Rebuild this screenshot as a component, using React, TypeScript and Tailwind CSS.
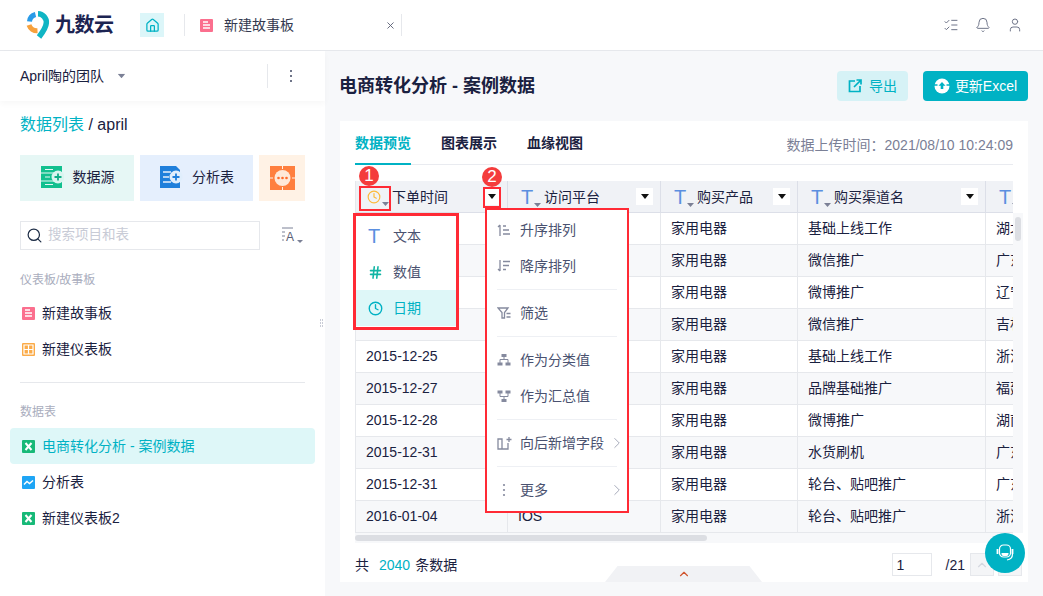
import React from "react";
import { Home, X, ListChecks, Bell, User, Search, Clock, ChevronRight, ChevronUp, Hash } from "lucide-react";

const rows = [
  ["", "", "家用电器", "基础上线工作", "湖北"],
  ["", "", "家用电器", "微信推广", "广东"],
  ["", "", "家用电器", "微博推广", "辽宁"],
  ["", "", "家用电器", "微信推广", "吉林"],
  ["2015-12-25", "", "家用电器", "基础上线工作", "浙江"],
  ["2015-12-27", "", "家用电器", "品牌基础推广", "福建"],
  ["2015-12-28", "", "家用电器", "微博推广", "湖南"],
  ["2015-12-31", "", "家用电器", "水货刷机", "广东"],
  ["2015-12-31", "", "家用电器", "轮台、贴吧推广", "广东"],
  ["2016-01-04", "IOS", "家用电器", "轮台、贴吧推广", "浙江"],
];

const Logo = () => (
  <svg width="24" height="28" viewBox="0 0 24 28" fill="none">
    <path d="M3.500 10.500 A8 8 0 0 1 9.500 3.500" stroke="#2a9be8" strokeWidth="5" />
    <path d="M12 2.800 A8.500 8.500 0 0 1 20.300 12 C20 17 16 22 13 26" stroke="#10b5c4" strokeWidth="5.500" />
    <path d="M3 14 A8.500 8.500 0 0 0 11.500 19.800" stroke="#f7a13c" strokeWidth="5" />
  </svg>
);

const StoryIcon = () => (
  <svg width="13" height="13" viewBox="0 0 13 13">
    <rect width="13" height="13" rx="1" fill="#fb6f8e" />
    <path d="M3 3h5M3 6h7M3 9h7" stroke="#fff" strokeWidth="1.300" />
  </svg>
);
const BoardIcon = () => (
  <svg width="13" height="13" viewBox="0 0 13 13">
    <rect width="13" height="13" rx="1" fill="#fbab48" />
    <path d="M2 2h9v9H2z M6.500 2v9 M2 6.500h9" stroke="#fff" strokeWidth="1.200" fill="none" />
  </svg>
);
const ExcelIcon = () => (
  <svg width="13" height="13" viewBox="0 0 13 13">
    <rect width="13" height="13" rx="1" fill="#17b978" />
    <path d="M3.500 3 L9.500 10 M9.500 3 L3.500 10" stroke="#fff" strokeWidth="2" />
  </svg>
);
const ChartIcon = () => (
  <svg width="13" height="13" viewBox="0 0 13 13">
    <rect width="13" height="13" rx="1" fill="#1ea5f5" />
    <path d="M2 8.500 L5 5.500 L7.500 7.500 L11 4.500" stroke="#fff" strokeWidth="1.500" fill="none" />
  </svg>
);

const DataSourceIcon = () => (
  <svg width="24" height="24" viewBox="0 0 24 24">
    <rect x="1" y="1" width="21" height="22" fill="#12c08f" />
    <path d="M1 8h21M1 16h21M5 4.500h8M5 12h5M5 19.500h8" stroke="#e6f7f5" strokeWidth="1.200" />
    <circle cx="18" cy="12" r="6.500" fill="#d9f5ef" />
    <path d="M18 8.500v7M14.500 12h7" stroke="#10ae86" strokeWidth="1.800" />
  </svg>
);
const AnalysisIcon = () => (
  <svg width="24" height="24" viewBox="0 0 24 24">
    <path d="M1 1h16l4 4v18H1z" fill="#1f7fdb" />
    <path d="M4 7h8M4 12h6M4 17h8" stroke="#e6f0fb" strokeWidth="1.400" />
    <circle cx="17" cy="12" r="6.500" fill="#e0eefc" />
    <path d="M17 8.500v7M13.500 12h7" stroke="#1f7fdb" strokeWidth="1.800" />
  </svg>
);
const MoreIcon = () => (
  <svg width="25" height="24" viewBox="0 0 25 24">
    <rect width="25" height="24" fill="#ff7f3e" />
    <path d="M12.500 0v3M12.500 21v3M0 12h3M22 12h3" stroke="#fff2e5" strokeWidth="1" />
    <circle cx="12.500" cy="12" r="8" fill="#ffe9d9" />
    <circle cx="8.500" cy="12" r="1.300" fill="#ff6a2a" />
    <circle cx="12.500" cy="12" r="1.300" fill="#ff6a2a" />
    <circle cx="16.500" cy="12" r="1.300" fill="#ff6a2a" />
  </svg>
);
const SortAzIcon = () => (
  <svg width="22" height="18" viewBox="0 0 22 18" fill="none">
    <path d="M1 1h11M1 5h3M1 9h3M1 13h2" stroke="#7b8096" strokeWidth="1" />
    <text x="5" y="14" fontSize="12" fill="#5b6075" fontFamily="Liberation Sans">A</text>
    <path d="M16 13h6l-3 3z" fill="#7b8096" />
  </svg>
);
const ExportIcon = () => (
  <svg width="14" height="14" viewBox="0 0 14 14" fill="none" stroke="#00b2c4" strokeWidth="1.700">
    <path d="M7 2H1.500v10.500H12V7M6 8l6.500-6.500M8.500 1H13v4.500" />
  </svg>
);
const RefreshIcon = () => (
  <svg width="16" height="16" viewBox="0 0 16 16">
    <circle cx="8" cy="8" r="7.500" fill="#fff" />
    <path d="M0 7h3.500M12.500 7H16" stroke="#00b2c4" strokeWidth="1.600" />
    <path d="M8 4l3.500 3.800H9.300V11H6.700V7.800H4.500z" fill="#00b2c4" />
  </svg>
);
const ChatIcon = () => (
  <svg width="24" height="24" viewBox="0 0 24 24" fill="none" stroke="#fff" strokeWidth="1.200">
    <rect x="6.500" y="4" width="11" height="12" rx="4" />
    <path d="M8.500 12h7v1a2 2 0 0 1-2 2h-3a2 2 0 0 1-2-2z" fill="#fff" stroke="none" />
    <path d="M4.500 8v5M19.500 8v5" strokeWidth="1.800" />
    <path d="M19.500 13c0 3.500-2.500 5.500-5.500 6" />
  </svg>
);

const gray = "#858a9e";
const Asc = () => (
  <svg width="14" height="14" viewBox="0 0 14 14" fill="none" stroke={gray} strokeWidth="1.300">
    <path d="M3 2v11M1 4l2-2M6 3h3M6 7h6M6 11h7" />
  </svg>
);
const Desc = () => (
  <svg width="14" height="14" viewBox="0 0 14 14" fill="none" stroke={gray} strokeWidth="1.300">
    <path d="M3 1v11M1 10l2 2M6 2.500h7M6 6.500h6M6 10.500h3" />
  </svg>
);
const Filter = () => (
  <svg width="14" height="14" viewBox="0 0 14 14" fill="none" stroke={gray} strokeWidth="1.300">
    <path d="M1 2h10L7.500 6.500V12H5V6.500z M9.500 7.500h4M9.500 11h4" />
  </svg>
);
const Category = () => (
  <svg width="14" height="14" viewBox="0 0 14 14" fill={gray} stroke={gray}>
    <rect x="5" y="1.500" width="4" height="2" />
    <rect x="1" y="10" width="4" height="2" />
    <rect x="9" y="10" width="4" height="2" />
    <path d="M3 10V6.500h8V10M7 3.500v3" fill="none" />
  </svg>
);
const Summary = () => (
  <svg width="14" height="14" viewBox="0 0 14 14" fill={gray} stroke={gray}>
    <rect x="1" y="2" width="4" height="2" />
    <rect x="9" y="2" width="4" height="2" />
    <rect x="5" y="10.500" width="4" height="2" />
    <path d="M3 4v3.500h8V4M7 7.500v3" fill="none" />
  </svg>
);
const AddField = () => (
  <svg width="15" height="15" viewBox="0 0 15 15" fill="none" stroke={gray} strokeWidth="1.300">
    <path d="M1 3h4v10H1zM5 13h6V7M12 1v5M9.500 3.500h5" />
  </svg>
);
const Dots = () => (
  <svg width="14" height="14" viewBox="0 0 14 14" fill={gray}>
    <circle cx="7" cy="2" r="1.100" />
    <circle cx="7" cy="7" r="1.100" />
    <circle cx="7" cy="12" r="1.100" />
  </svg>
);

const Caret = ({ className = "" }: { className?: string }) => (
  <svg width="7" height="4" viewBox="0 0 7 4" className={className}>
    <path d="M0 0h7L3.500 4z" fill="#7b8096" />
  </svg>
);

const SideItem = ({ icon, label, active }: { icon: React.ReactNode; label: string; active?: boolean }) => (
  <div className={`flex h-9 items-center gap-[7px] rounded-sm pl-3 text-sm ${active ? "bg-[#def7f8] text-[#00b2c4]" : "text-[#1a2140]"}`}>
    <span className="flex w-[13px]">{icon}</span>
    {label}
  </div>
);

const HeadCell = ({ icon, label, w, last }: { icon: React.ReactNode; label: string; w: string; last?: boolean }) => (
  <th className={`${w} h-8 border-r border-b border-[#dcdfe8] bg-[#f0f2f6] p-0 text-left font-normal`}>
    <div className="flex h-full items-center pl-[13px] pr-[7px] text-sm text-[#1a2140]">
      {icon}
      <span className="truncate">{label}</span>
      {!last && (
        <span className="ml-auto flex h-[17px] w-[17px] shrink-0 items-center justify-center bg-white">
          <span className="h-0 w-0 border-x-[4.500px] border-t-[5px] border-x-transparent border-t-[#111]" />
        </span>
      )}
    </div>
  </th>
);

const TIcon = () => (
  <span className="relative mr-[4px] w-[19px] shrink-0 text-[20px] leading-none text-[#5b8fe0]">
    T
    <Caret className="absolute bottom-0 left-[13px]" />
  </span>
);

const MenuItem = ({ icon, label, arrow }: { icon: React.ReactNode; label: string; arrow?: boolean }) => (
  <div className="flex h-9 items-center pl-[10px] pr-[1px] text-sm text-[#4a5270]">
    <span className="flex w-[23px] shrink-0">{icon}</span>
    <span>{label}</span>
    {arrow && <ChevronRight size={18} strokeWidth={1} className="ml-auto shrink-0 text-[#8a8fa3]" />}
  </div>
);
const MenuLine = () => <div className="mx-[10px] my-[5px] h-px bg-[#eef0f4]" />;

export default function App() {
  return (
    <div
      className="relative flex h-[596px] w-[1043px] flex-col overflow-hidden bg-white"
      style={{ fontFamily: "'Liberation Sans','Noto Sans CJK SC',sans-serif" }}
    >
      {/* top bar */}
      <header className="flex h-[51px] shrink-0 items-center border-b border-[#e6e8ec] pl-[26px]">
        <Logo />
        <span className="ml-[5px] w-[58px] whitespace-nowrap text-[20px] font-bold leading-none tracking-[-0.5px] text-[#1c2452]">九数云</span>
        <span className="ml-[27px] flex h-6 w-6 items-center justify-center bg-[#dcf6f9]">
          <Home size={15} className="text-[#00b2c4]" />
        </span>
        <span className="ml-5 h-[22px] w-px bg-[#e6e8ec]" />
        <span className="ml-[15px] flex"><StoryIcon /></span>
        <span className="ml-[11px] text-sm text-[#33394f]">新建故事板</span>
        <X size={11} className="ml-[91px] text-[#5b6075]" />
        <span className="ml-[5px] h-[22px] w-px bg-[#e6e8ec]" />
        <div className="ml-auto flex items-center gap-4 pr-5 text-[#6f7589]">
          <ListChecks size={16} strokeWidth={1.500} />
          <Bell size={16} strokeWidth={1.500} />
          <User size={16} strokeWidth={1.500} />
        </div>
      </header>

      <div className="flex min-h-0 flex-1">
        {/* sidebar */}
        <aside className="relative w-[325px] shrink-0 bg-white">
          <div className="flex h-[50px] items-center pl-5 shadow-[0_3px_6px_rgba(0,0,0,0.03)]">
            <span className="text-sm text-[#1a2140]">April陶的团队</span>
            <Caret className="ml-[14px] scale-110" />
            <span className="ml-[142px] h-6 w-px bg-[#e6e8ec]" />
            <span className="ml-[22px] flex flex-col gap-[3px]">
              <i className="h-[2px] w-[2px] bg-[#6f7589]" />
              <i className="h-[2px] w-[2px] bg-[#6f7589]" />
              <i className="h-[2px] w-[2px] bg-[#6f7589]" />
            </span>
          </div>
          <div className="mt-[15px] pl-5 text-base leading-[18px] text-[#1a2140]">
            <span className="text-[#00b2c4]">数据列表</span> / april
          </div>
          <div className="mt-[21px] flex gap-[6px] pl-5">
            <div className="flex h-[46px] w-[114px] items-center justify-center gap-[9px] bg-[#e6f7f5] pb-[2px] text-sm text-[#1a2140]">
              <DataSourceIcon />
              数据源
            </div>
            <div className="flex h-[46px] w-[113px] items-center justify-center gap-[9px] bg-[#e5effd] pb-[2px] text-sm text-[#1a2140]">
              <AnalysisIcon />
              分析表
            </div>
            <div className="flex h-[46px] w-[46px] items-center justify-center bg-[#fff2e5]">
              <MoreIcon />
            </div>
          </div>
          <div className="mt-5 flex items-center pl-5">
            <div className="flex h-[29px] w-[240px] items-center gap-[5px] border border-[#e6e8ec] pl-[5px] text-[13.500px] text-[#c8cbd6]">
              <Search size={17} strokeWidth={1.700} className="text-[#1c2c45]" />
              搜索项目和表
            </div>
            <span className="ml-[21px] flex"><SortAzIcon /></span>
          </div>
          <div className="mt-[23px] pl-5 text-xs leading-[14px] text-[#a9adbd]">仪表板/故事板</div>
          <div className="mt-[8px] px-[10px]">
            <SideItem icon={<StoryIcon />} label="新建故事板" />
            <SideItem icon={<BoardIcon />} label="新建仪表板" />
          </div>
          <div className="mx-5 mt-[15px] h-px bg-[#e6e8ec]" />
          <div className="mt-[22px] pl-5 text-xs leading-[14px] text-[#a9adbd]">数据表</div>
          <div className="mt-[9px] px-[10px]">
            <SideItem icon={<ExcelIcon />} label="电商转化分析 - 案例数据" active />
            <SideItem icon={<ChartIcon />} label="分析表" />
            <SideItem icon={<ExcelIcon />} label="新建仪表板2" />
          </div>
          <span className="absolute right-[2px] top-[268px] grid grid-cols-2 gap-[1px]">
            {[0, 1, 2, 3, 4, 5].map((i) => (
              <i key={i} className="h-[2px] w-[1px] bg-[#c9ccd6]" />
            ))}
          </span>
        </aside>

        {/* main */}
        <main className="flex min-w-0 flex-1 flex-col bg-[#f7f8fa] px-[15px] pt-[20px]">
          <div className="flex h-[30px] items-center">
            <h1 className="-ml-px text-lg font-bold text-[#1a2140]">电商转化分析 - 案例数据</h1>
            <button className="ml-auto flex h-[30px] w-[71px] items-center justify-center gap-[7px] rounded-sm bg-[#d6f2f6] text-sm text-[#00b2c4]">
              <ExportIcon />
              导出
            </button>
            <button className="ml-[15px] flex h-[30px] w-[105px] items-center justify-center gap-[5px] rounded-sm bg-[#00b2c4] text-sm text-white">
              <RefreshIcon />
              更新Excel
            </button>
          </div>

          <section className="relative mt-5 flex h-[461px] w-[688px] flex-col bg-white px-[15px]">
            <div className="flex h-[44px] shrink-0 items-start border-b border-[#e9ebf0] pt-[14px] text-sm font-bold leading-4 text-[#1a2140]">
              <span className="relative mr-[30px] text-[#00b2c4]">
                数据预览
                <i className="absolute -bottom-[14px] left-0 h-[2px] w-full bg-[#00b2c4]" />
              </span>
              <span className="mr-[30px]">图表展示</span>
              <span>血缘视图</span>
              <span className="ml-auto text-sm font-normal text-[#7b8096]">数据上传时间：2021/08/10 10:24:09</span>
            </div>

            <div className="mt-4 h-[352px] w-[658px] shrink-0 overflow-hidden">
              <table className="w-[731px] table-fixed border-separate border-spacing-0 border-l border-[#e6e8ec]">
                <thead>
                  <tr>
                    <HeadCell
                      w="w-[152px]"
                      icon={
                        <span className="relative -ml-[2px] mr-[6px] w-[19px] shrink-0 text-[#fcb93a]">
                          <Clock size={14} strokeWidth={2} />
                          <Caret className="absolute -bottom-[2px] left-[15px]" />
                        </span>
                      }
                      label="下单时间"
                    />
                    <HeadCell w="w-[153px]" icon={<TIcon />} label="访问平台" />
                    <HeadCell w="w-[137px]" icon={<TIcon />} label="购买产品" />
                    <HeadCell w="w-[188px]" icon={<TIcon />} label="购买渠道名" />
                    <HeadCell w="w-[101px]" icon={<TIcon />} label="省份" last />
                  </tr>
                </thead>
                <tbody>
                  {rows.map((r, i) => (
                    <tr key={i} className={i % 2 ? "bg-[#f7f8fa]" : "bg-white"}>
                      {r.map((c, j) => (
                        <td key={j} className="h-8 border-r border-b border-[#e6e8ec] px-[10px] pb-[2px] pt-0 text-sm text-[#1a2140]">
                          {c}
                        </td>
                      ))}
                    </tr>
                  ))}
                </tbody>
              </table>
            </div>

            {/* horizontal scrollbar */}
            <div className="h-[10px] w-[658px] shrink-0 bg-[#f7f8fa] py-[2px]">
              <div className="h-[6px] w-[352px] rounded-[3px] bg-[#dcdee3]" />
            </div>

            <div className="mt-[10px] flex h-[23px] items-center pr-[48px] text-sm text-[#1a2140]">
              共<span className="ml-[10px] mr-[5px] text-[#00b2c4]">2040</span>条数据
              <span className="ml-auto flex h-[23px] w-10 items-center border border-[#e6e8ec] pl-[4px]">1</span>
              <span className="ml-[14px]">/21</span>
            </div>

            {/* vertical scrollbar */}
            <div className="absolute left-[673px] top-[92px] h-[320px] w-[10px] bg-[#f7f8fa]">
              <div className="ml-[2px] mt-[4px] h-6 w-[6px] rounded-[3px] bg-[#dcdee3]" />
            </div>

            {/* pager buttons */}
            <div className="absolute left-[630px] top-[432px] flex gap-[4px]">
              <span className="flex h-[23px] w-6 items-center justify-center border border-[#e6e8ec] bg-[#f4f5f7]">
                <ChevronUp size={14} className="text-[#d5d8e0]" />
              </span>
              <span className="h-[23px] w-6 border border-[#e6e8ec] bg-[#f4f5f7]" />
            </div>
          </section>
        </main>
      </div>

      {/* collapse tab */}
      <div className="absolute bottom-[14px] left-[605px] flex h-4 w-[157px] items-center justify-center bg-[#f1f2f5] [clip-path:polygon(8%_0,92%_0,100%_100%,0_100%)]">
        <ChevronUp size={14} className="text-[#d0562f]" />
      </div>

      {/* chat */}
      <div className="absolute left-[985px] top-[533px] flex h-10 w-10 items-center justify-center rounded-full bg-[#00b2c4]">
        <ChatIcon />
      </div>

      {/* annotation 1 */}
      <div className="absolute left-[359px] top-[186px] h-[25px] w-[32px] border-2 border-[#ff2a35]" />
      <div className="absolute left-[359px] top-[166px] flex h-5 w-5 items-center justify-center rounded-full bg-[#f43c3c] text-[17px] text-white">1</div>
      <div className="absolute left-[353px] top-[213px] w-[106px] border-[3px] border-[#ff2a35] bg-white pb-[1px] pt-[2px]">
        <div className="flex h-9 items-center pl-[12px] text-sm text-[#4a5270]">
          <span className="w-[25px] text-[20px] leading-none text-[#5b8fe0]">T</span>
          <span>文本</span>
        </div>
        <div className="flex h-9 items-center pl-[12px] text-sm text-[#4a5270]">
          <span className="flex w-[25px]"><Hash size={15} strokeWidth={2.500} className="text-[#12b5a5]" /></span>
          <span>数值</span>
        </div>
        <div className="flex h-9 items-center bg-[#def7f8] pl-[12px] text-sm text-[#00b2c4]">
          <span className="flex w-[25px]"><Clock size={15} strokeWidth={2.200} /></span>
          <span>日期</span>
        </div>
      </div>

      {/* annotation 2 */}
      <div className="absolute left-[483px] top-[187px] h-[21px] w-[18px] border-2 border-[#ff2a35]" />
      <div className="absolute left-[482px] top-[167px] flex h-5 w-5 items-center justify-center rounded-full bg-[#f43c3c] text-[17px] text-white">2</div>
      <div className="absolute left-[485px] top-[208px] w-[144px] border-2 border-[#ff2a35] bg-white pb-[3px] pt-[2px]">
        <MenuItem icon={<Asc />} label="升序排列" />
        <MenuItem icon={<Desc />} label="降序排列" />
        <MenuLine />
        <MenuItem icon={<Filter />} label="筛选" />
        <MenuLine />
        <MenuItem icon={<Category />} label="作为分类值" />
        <MenuItem icon={<Summary />} label="作为汇总值" />
        <MenuLine />
        <MenuItem icon={<AddField />} label="向后新增字段" arrow />
        <MenuLine />
        <MenuItem icon={<Dots />} label="更多" arrow />
      </div>
    </div>
  );
}
